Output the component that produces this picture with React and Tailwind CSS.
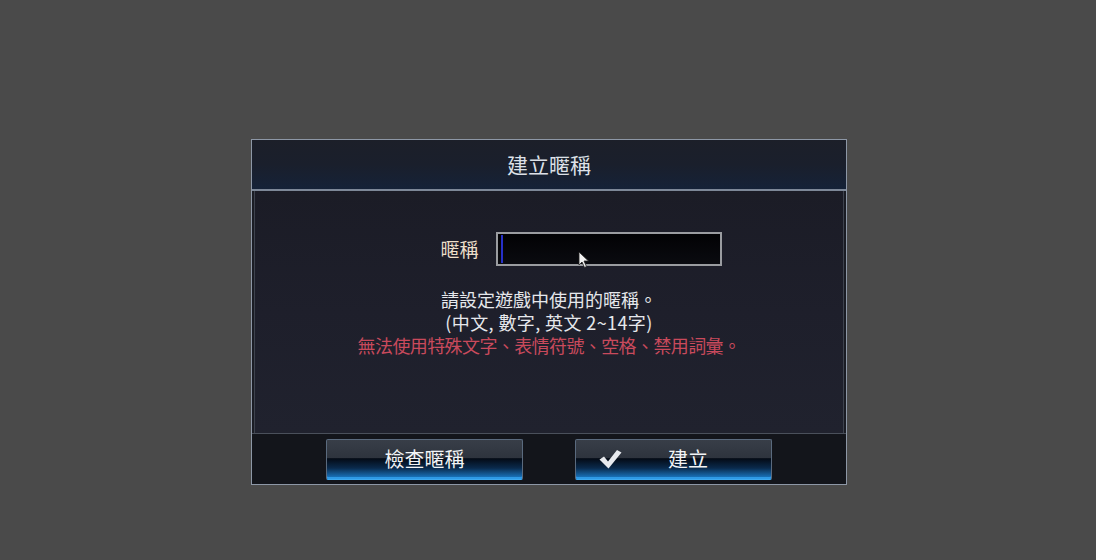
import React from "react";

const font = { fontFamily: '"Noto Sans CJK TC", "Noto Sans", sans-serif' };

function Check() {
  return (
    <svg width="24" height="20" viewBox="0 0 24 20" className="shrink-0">
      <path d="M1.5 10.5 L6 7.5 L10 12.5 L19 1 L23.5 3.5 L10.5 19.5 Z" fill="#e8eaee" />
    </svg>
  );
}

function Pointer() {
  return (
    <svg width="12" height="18" viewBox="0 0 12 18" className="absolute left-[80px] top-[17px]">
      <path d="M1 1 L1 14 L4 11 L6.5 16.5 L8.5 15.5 L6 10 L10.5 10 Z" fill="#f2f2f2" stroke="#222" strokeWidth="0.8" />
    </svg>
  );
}

function GameButton({ children, className = "" }) {
  return (
    <button
      className={
        "h-[41px] w-[197px] rounded-[2px] border border-[#5a6a7e] border-b-[#3ea9f0] bg-[linear-gradient(180deg,#383e48_0%,#2e343e_45%,#040b16_48%,#0a2a4c_72%,#1c80d0_100%)] text-[20px] text-[#f2f4f6] shadow-[inset_0_-2px_0_#2f9ae6] " +
        className
      }
    >
      {children}
    </button>
  );
}

export default function App() {
  return (
    <div className="flex h-[560px] w-full justify-center bg-[#4a4a4a] pl-[2px] pt-[139px]" style={font}>
      <div className="flex h-[346px] w-[596px] flex-col border border-[#8d97a6] bg-[#1a1c24]">
        {/* header */}
        <div className="flex h-[49px] items-center justify-center bg-[linear-gradient(180deg,#1c1f29_0%,#1a1f2c_50%,#152238_100%)] text-[21px] text-[#dde1e8]">
          建立暱稱
        </div>
        <div className="h-[2px] bg-[#7d8898]" />

        {/* body */}
        <div className="mx-[2px] flex h-[242px] flex-col items-center border-x border-[#3e434e] bg-[linear-gradient(180deg,#1b1c26_0%,#1e1f2b_50%,#20222e_100%)]">
          <div className="ml-[64px] mt-[41px] flex items-center gap-[17px]">
            <span className="text-[19px] text-[#ecdfca]">暱稱</span>
            <div className="relative h-[34px] w-[226px] border-2 border-[#9a9ca0] bg-[linear-gradient(180deg,#020204,#0a0b10)]">
              <div className="absolute left-[3px] top-[1px] h-[28px] w-[2px] bg-[#2630c8]" />
              <Pointer />
            </div>
          </div>
          <div className="mt-[22px] flex flex-col items-center text-[18px] leading-[23px] text-[#e6e8ec]">
            <span>請設定遊戲中使用的暱稱。</span>
            <span className="tracking-[0.4px]">(中文, 數字, 英文 2~14字)</span>
            <span className="tracking-[-0.6px] text-[#c94a5c]">無法使用特殊文字、表情符號、空格、禁用詞彙。</span>
          </div>
        </div>
        <div className="h-px bg-[#4a505b]" />

        {/* footer */}
        <div className="flex flex-1 items-center justify-center gap-[52px] bg-[#13151b]">
          <GameButton>檢查暱稱</GameButton>
          <GameButton className="flex items-center pl-[22px]">
            <Check />
            <span className="ml-[46px]">建立</span>
          </GameButton>
        </div>
      </div>
    </div>
  );
}
